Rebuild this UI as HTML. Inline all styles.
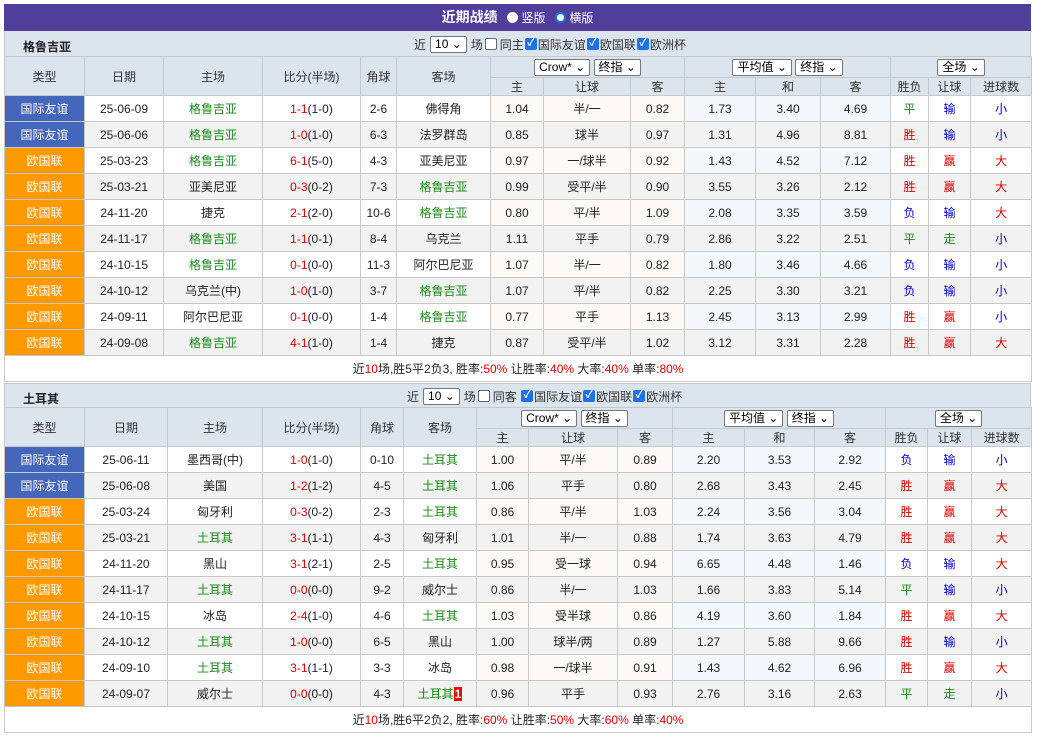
<!DOCTYPE html>
<html><head><meta charset="utf-8"><style>
*{box-sizing:border-box;margin:0;padding:0}
body{width:1037px;height:736px;background:#fff;font-family:"Liberation Sans","Noto Sans CJK SC",sans-serif;font-size:12px;color:#222;position:relative;overflow:hidden}
.title{position:absolute;left:4px;top:4px;width:1027px;height:27px;background:#4f3f9b;color:#fff;font-weight:bold;font-size:14px;text-align:center;line-height:27px}
.title span.r{display:inline-block;width:11px;height:11px;border-radius:50%;background:#fff;vertical-align:-1px;margin:0 3px 0 6px}
.title span.r2{display:inline-block;width:11px;height:11px;border-radius:50%;border:2px solid #1a73e8;background:#fff;vertical-align:-1px;margin:0 3px 0 6px}
.title b{font-weight:normal;font-size:12px}
.bar{position:absolute;left:4px;width:1027px;background:#dce4ee;border-left:1px solid #c4c4c4;border-right:1px solid #c4c4c4}
.bar .nm{position:absolute;left:18px;font-weight:bold;font-size:12px}
.bar .ctl{position:absolute;font-size:12px;color:#333;white-space:nowrap;display:flex;align-items:center;height:18px}
.sel{display:inline-block;border:1px solid #777;background:#fff;border-radius:2px;height:17px;line-height:15px;padding:0 4px;font-size:12px;color:#000;vertical-align:middle}
.ctl .sel{margin:0 4px}
.cb{display:inline-block;width:12px;height:12px;border:1px solid #666;border-radius:2px;background:#fff;margin:0 3px 0 2px}
.cbk{display:inline-block;width:12px;height:12px;border-radius:2px;background:#1a73e8;color:#fff;font-size:10px;line-height:12px;text-align:center;font-weight:bold;margin:0 1px 0 1px}
table{position:absolute;left:4px;width:1027px;border-collapse:collapse;table-layout:fixed}
td,th{border:1px solid #c8c8c8;text-align:center;font-weight:normal;white-space:nowrap;overflow:hidden}
th{background:#dce4ee;color:#333}
tr.h1 th{height:21px}tr.h2 th{height:18px}
tr.d td{height:26px}
tr.d:nth-child(even) td{background:#f2f2f2}
tr.d:nth-child(odd) td.p{background:#fdf9f6}
tr.d:nth-child(odd) td.b{background:#f3f8fc}
td.fy{background:#4466bb!important;color:#fff}
td.oz{background:#ff9900!important;color:#fff}
.g{color:#1a8a1a}.r{color:#d00}.bl{color:#0000cc}
td.sum{height:26px;background:#fff}
.badge{background:#e00;color:#fff;font-weight:bold;padding:0 1px}
</style></head><body>
<div class="title">近期战绩 <span class="r"></span><b>竖版</b> <span class="r2"></span><b>横版</b></div>

<div class="bar" style="top:31px;height:25px"><span class="nm" style="top:7px">格鲁吉亚</span>
<span class="ctl" style="left:409px;top:4px">近<span class="sel">10 ⌄</span>场<span class="cb"></span>同主<span class="cbk">✓</span>国际友谊<span class="cbk">✓</span>欧国联<span class="cbk">✓</span>欧洲杯</span></div>

<table style="top:56px">
<colgroup><col style="width:80px"><col style="width:79px"><col style="width:99px"><col style="width:98px"><col style="width:36px"><col style="width:94px"><col style="width:53px"><col style="width:87px"><col style="width:54px"><col style="width:71px"><col style="width:65px"><col style="width:70px"><col style="width:38px"><col style="width:42px"><col style="width:61px"></colgroup>
<tr class="h1"><th rowspan="2">类型</th><th rowspan="2">日期</th><th rowspan="2">主场</th><th rowspan="2">比分(半场)</th><th rowspan="2">角球</th><th rowspan="2">客场</th><th colspan="3"><span class="sel">Crow* ⌄</span> <span class="sel">终指 ⌄</span></th><th colspan="3"><span class="sel">平均值 ⌄</span> <span class="sel">终指 ⌄</span></th><th colspan="3"><span class="sel">全场 ⌄</span></th></tr>
<tr class="h2"><th>主</th><th>让球</th><th>客</th><th>主</th><th>和</th><th>客</th><th>胜负</th><th>让球</th><th>进球数</th></tr>
<tr class="d"><td class="fy">国际友谊</td><td>25-06-09</td><td class="g">格鲁吉亚</td><td><span class="r">1-1</span>(1-0)</td><td>2-6</td><td>佛得角</td><td class="p">1.04</td><td class="p">半/一</td><td class="p">0.82</td><td class="b">1.73</td><td class="b">3.40</td><td class="b">4.69</td><td class="g">平</td><td class="bl">输</td><td class="bl">小</td></tr>
<tr class="d"><td class="fy">国际友谊</td><td>25-06-06</td><td class="g">格鲁吉亚</td><td><span class="r">1-0</span>(1-0)</td><td>6-3</td><td>法罗群岛</td><td class="p">0.85</td><td class="p">球半</td><td class="p">0.97</td><td class="b">1.31</td><td class="b">4.96</td><td class="b">8.81</td><td class="r">胜</td><td class="bl">输</td><td class="bl">小</td></tr>
<tr class="d"><td class="oz">欧国联</td><td>25-03-23</td><td class="g">格鲁吉亚</td><td><span class="r">6-1</span>(5-0)</td><td>4-3</td><td>亚美尼亚</td><td class="p">0.97</td><td class="p">一/球半</td><td class="p">0.92</td><td class="b">1.43</td><td class="b">4.52</td><td class="b">7.12</td><td class="r">胜</td><td class="r">赢</td><td class="r">大</td></tr>
<tr class="d"><td class="oz">欧国联</td><td>25-03-21</td><td>亚美尼亚</td><td><span class="r">0-3</span>(0-2)</td><td>7-3</td><td class="g">格鲁吉亚</td><td class="p">0.99</td><td class="p">受平/半</td><td class="p">0.90</td><td class="b">3.55</td><td class="b">3.26</td><td class="b">2.12</td><td class="r">胜</td><td class="r">赢</td><td class="r">大</td></tr>
<tr class="d"><td class="oz">欧国联</td><td>24-11-20</td><td>捷克</td><td><span class="r">2-1</span>(2-0)</td><td>10-6</td><td class="g">格鲁吉亚</td><td class="p">0.80</td><td class="p">平/半</td><td class="p">1.09</td><td class="b">2.08</td><td class="b">3.35</td><td class="b">3.59</td><td class="bl">负</td><td class="bl">输</td><td class="r">大</td></tr>
<tr class="d"><td class="oz">欧国联</td><td>24-11-17</td><td class="g">格鲁吉亚</td><td><span class="r">1-1</span>(0-1)</td><td>8-4</td><td>乌克兰</td><td class="p">1.11</td><td class="p">平手</td><td class="p">0.79</td><td class="b">2.86</td><td class="b">3.22</td><td class="b">2.51</td><td class="g">平</td><td class="g">走</td><td class="bl">小</td></tr>
<tr class="d"><td class="oz">欧国联</td><td>24-10-15</td><td class="g">格鲁吉亚</td><td><span class="r">0-1</span>(0-0)</td><td>11-3</td><td>阿尔巴尼亚</td><td class="p">1.07</td><td class="p">半/一</td><td class="p">0.82</td><td class="b">1.80</td><td class="b">3.46</td><td class="b">4.66</td><td class="bl">负</td><td class="bl">输</td><td class="bl">小</td></tr>
<tr class="d"><td class="oz">欧国联</td><td>24-10-12</td><td>乌克兰(中)</td><td><span class="r">1-0</span>(1-0)</td><td>3-7</td><td class="g">格鲁吉亚</td><td class="p">1.07</td><td class="p">平/半</td><td class="p">0.82</td><td class="b">2.25</td><td class="b">3.30</td><td class="b">3.21</td><td class="bl">负</td><td class="bl">输</td><td class="bl">小</td></tr>
<tr class="d"><td class="oz">欧国联</td><td>24-09-11</td><td>阿尔巴尼亚</td><td><span class="r">0-1</span>(0-0)</td><td>1-4</td><td class="g">格鲁吉亚</td><td class="p">0.77</td><td class="p">平手</td><td class="p">1.13</td><td class="b">2.45</td><td class="b">3.13</td><td class="b">2.99</td><td class="r">胜</td><td class="r">赢</td><td class="bl">小</td></tr>
<tr class="d"><td class="oz">欧国联</td><td>24-09-08</td><td class="g">格鲁吉亚</td><td><span class="r">4-1</span>(1-0)</td><td>1-4</td><td>捷克</td><td class="p">0.87</td><td class="p">受平/半</td><td class="p">1.02</td><td class="b">3.12</td><td class="b">3.31</td><td class="b">2.28</td><td class="r">胜</td><td class="r">赢</td><td class="r">大</td></tr>
<tr><td class="sum" colspan="15">近<span class="r">10</span>场,胜5平2负3, 胜率:<span class="r">50%</span> 让胜率:<span class="r">40%</span> 大率:<span class="r">40%</span> 单率:<span class="r">80%</span></td></tr>
</table>

<div class="bar" style="top:383px;height:24px;border-top:1px solid #c4c4c4"><span class="nm" style="top:6px">土耳其</span>
<span class="ctl" style="left:402px;top:3px">近<span class="sel">10 ⌄</span>场<span class="cb"></span>同客&nbsp;<span class="cbk">✓</span>国际友谊<span class="cbk">✓</span>欧国联<span class="cbk">✓</span>欧洲杯</span></div>

<table style="top:407px">
<colgroup><col style="width:80px"><col style="width:83px"><col style="width:95px"><col style="width:98px"><col style="width:43px"><col style="width:73px"><col style="width:52px"><col style="width:89px"><col style="width:55px"><col style="width:72px"><col style="width:70px"><col style="width:71px"><col style="width:42px"><col style="width:44px"><col style="width:60px"></colgroup>
<tr class="h1"><th rowspan="2">类型</th><th rowspan="2">日期</th><th rowspan="2">主场</th><th rowspan="2">比分(半场)</th><th rowspan="2">角球</th><th rowspan="2">客场</th><th colspan="3"><span class="sel">Crow* ⌄</span> <span class="sel">终指 ⌄</span></th><th colspan="3"><span class="sel">平均值 ⌄</span> <span class="sel">终指 ⌄</span></th><th colspan="3"><span class="sel">全场 ⌄</span></th></tr>
<tr class="h2"><th>主</th><th>让球</th><th>客</th><th>主</th><th>和</th><th>客</th><th>胜负</th><th>让球</th><th>进球数</th></tr>
<tr class="d"><td class="fy">国际友谊</td><td>25-06-11</td><td>墨西哥(中)</td><td><span class="r">1-0</span>(1-0)</td><td>0-10</td><td class="g">土耳其</td><td class="p">1.00</td><td class="p">平/半</td><td class="p">0.89</td><td class="b">2.20</td><td class="b">3.53</td><td class="b">2.92</td><td class="bl">负</td><td class="bl">输</td><td class="bl">小</td></tr>
<tr class="d"><td class="fy">国际友谊</td><td>25-06-08</td><td>美国</td><td><span class="r">1-2</span>(1-2)</td><td>4-5</td><td class="g">土耳其</td><td class="p">1.06</td><td class="p">平手</td><td class="p">0.80</td><td class="b">2.68</td><td class="b">3.43</td><td class="b">2.45</td><td class="r">胜</td><td class="r">赢</td><td class="r">大</td></tr>
<tr class="d"><td class="oz">欧国联</td><td>25-03-24</td><td>匈牙利</td><td><span class="r">0-3</span>(0-2)</td><td>2-3</td><td class="g">土耳其</td><td class="p">0.86</td><td class="p">平/半</td><td class="p">1.03</td><td class="b">2.24</td><td class="b">3.56</td><td class="b">3.04</td><td class="r">胜</td><td class="r">赢</td><td class="r">大</td></tr>
<tr class="d"><td class="oz">欧国联</td><td>25-03-21</td><td class="g">土耳其</td><td><span class="r">3-1</span>(1-1)</td><td>4-3</td><td>匈牙利</td><td class="p">1.01</td><td class="p">半/一</td><td class="p">0.88</td><td class="b">1.74</td><td class="b">3.63</td><td class="b">4.79</td><td class="r">胜</td><td class="r">赢</td><td class="r">大</td></tr>
<tr class="d"><td class="oz">欧国联</td><td>24-11-20</td><td>黑山</td><td><span class="r">3-1</span>(2-1)</td><td>2-5</td><td class="g">土耳其</td><td class="p">0.95</td><td class="p">受一球</td><td class="p">0.94</td><td class="b">6.65</td><td class="b">4.48</td><td class="b">1.46</td><td class="bl">负</td><td class="bl">输</td><td class="r">大</td></tr>
<tr class="d"><td class="oz">欧国联</td><td>24-11-17</td><td class="g">土耳其</td><td><span class="r">0-0</span>(0-0)</td><td>9-2</td><td>威尔士</td><td class="p">0.86</td><td class="p">半/一</td><td class="p">1.03</td><td class="b">1.66</td><td class="b">3.83</td><td class="b">5.14</td><td class="g">平</td><td class="bl">输</td><td class="bl">小</td></tr>
<tr class="d"><td class="oz">欧国联</td><td>24-10-15</td><td>冰岛</td><td><span class="r">2-4</span>(1-0)</td><td>4-6</td><td class="g">土耳其</td><td class="p">1.03</td><td class="p">受半球</td><td class="p">0.86</td><td class="b">4.19</td><td class="b">3.60</td><td class="b">1.84</td><td class="r">胜</td><td class="r">赢</td><td class="r">大</td></tr>
<tr class="d"><td class="oz">欧国联</td><td>24-10-12</td><td class="g">土耳其</td><td><span class="r">1-0</span>(0-0)</td><td>6-5</td><td>黑山</td><td class="p">1.00</td><td class="p">球半/两</td><td class="p">0.89</td><td class="b">1.27</td><td class="b">5.88</td><td class="b">9.66</td><td class="r">胜</td><td class="bl">输</td><td class="bl">小</td></tr>
<tr class="d"><td class="oz">欧国联</td><td>24-09-10</td><td class="g">土耳其</td><td><span class="r">3-1</span>(1-1)</td><td>3-3</td><td>冰岛</td><td class="p">0.98</td><td class="p">一/球半</td><td class="p">0.91</td><td class="b">1.43</td><td class="b">4.62</td><td class="b">6.96</td><td class="r">胜</td><td class="r">赢</td><td class="r">大</td></tr>
<tr class="d"><td class="oz">欧国联</td><td>24-09-07</td><td>威尔士</td><td><span class="r">0-0</span>(0-0)</td><td>4-3</td><td class="g">土耳其<span class="badge">1</span></td><td class="p">0.96</td><td class="p">平手</td><td class="p">0.93</td><td class="b">2.76</td><td class="b">3.16</td><td class="b">2.63</td><td class="g">平</td><td class="g">走</td><td class="bl">小</td></tr>
<tr><td class="sum" colspan="15">近<span class="r">10</span>场,胜6平2负2, 胜率:<span class="r">60%</span> 让胜率:<span class="r">50%</span> 大率:<span class="r">60%</span> 单率:<span class="r">40%</span></td></tr>
</table>
</body></html>
